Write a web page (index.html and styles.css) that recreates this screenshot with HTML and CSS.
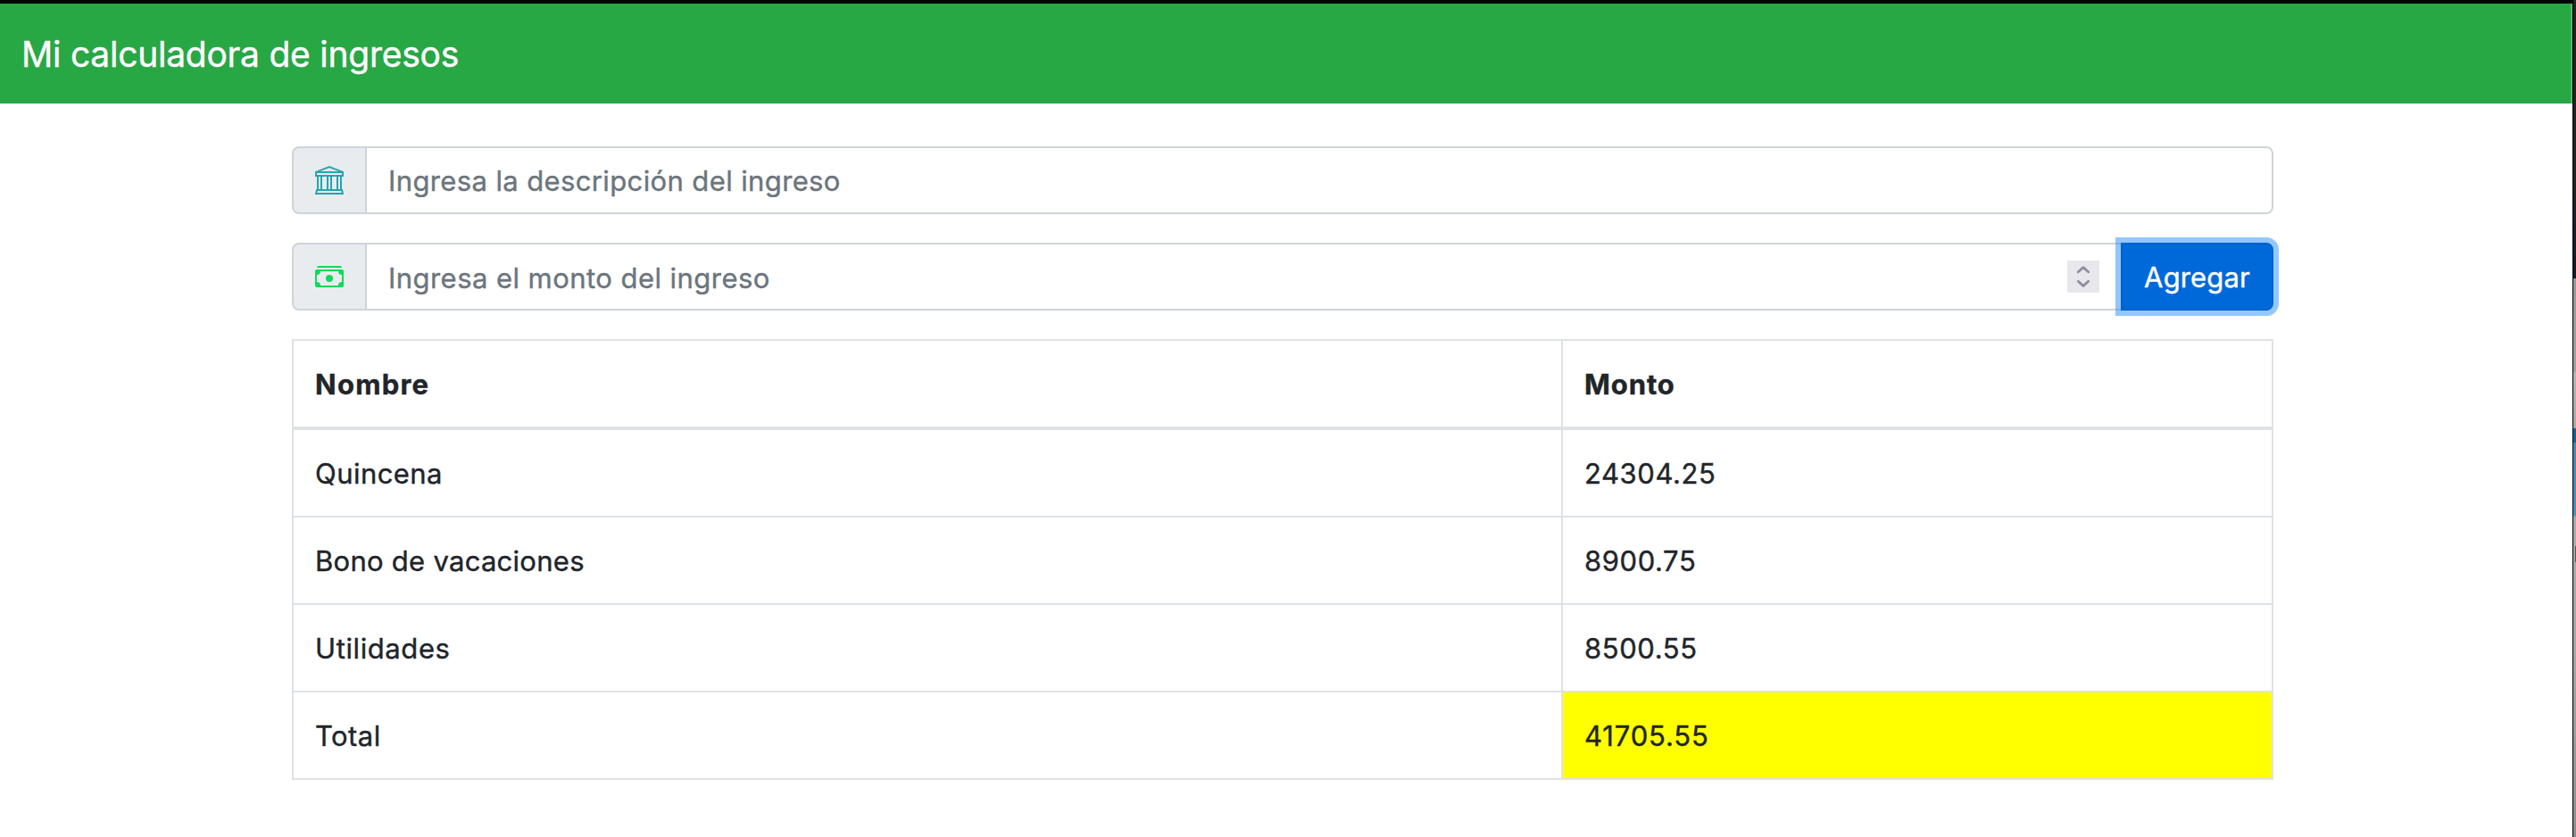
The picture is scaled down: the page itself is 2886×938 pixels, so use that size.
FILE: index.html
```
<!DOCTYPE html>
<html lang="es">
<head>
  <meta charset="utf-8">
  <title>Mi calculadora de ingresos</title>
  <link rel="stylesheet" href="styles.css">
</head>
<body>
  <div class="screen">
    <div class="window">
      <nav class="navbar"><span class="brand">Mi calculadora de ingresos</span></nav>
      <main class="container">
        <div class="input-group">
          <span class="addon addon-bank">
            <svg class="icon" viewBox="0 0 32 32" fill="none" stroke="currentColor" stroke-width="2">
              <path d="M1.5 6.7 16 1.1 30.5 6.7" stroke-width="1.9"/>
              <path d="M1 7h30v4H1z"/>
              <path d="M3 12v14M7 12v14M14 12v14M18 12v14M25 12v14M29 12v14"/>
              <path d="M2 27h28l1 4H1z"/>
            </svg>
          </span>
          <input class="field field-description" type="text" placeholder="Ingresa la descripción del ingreso">
        </div>
        <div class="input-group">
          <span class="addon addon-cash">
            <svg class="icon" viewBox="0 0 16 16" fill="currentColor">
              <path d="M14 3H1a1 1 0 0 1 1-1h12a1 1 0 0 1 1 1h-1z"/>
              <path fill-rule="evenodd" d="M15 5H1v8h14V5zM1 4a1 1 0 0 0-1 1v8a1 1 0 0 0 1 1h14a1 1 0 0 0 1-1V5a1 1 0 0 0-1-1H1z"/>
              <path d="M13 5a2 2 0 0 0 2 2V5h-2zM3 5a2 2 0 0 1-2 2V5h2zm10 8a2 2 0 0 1 2-2v2h-2zM3 13a2 2 0 0 0-2-2v2h2zm7-4a2 2 0 1 1-4 0 2 2 0 0 1 4 0z"/>
            </svg>
          </span>
          <div class="field field-amount">
            <input class="amount-input" type="text" inputmode="decimal" placeholder="Ingresa el monto del ingreso">
            <span class="spinner">
              <svg class="spinner-icon" viewBox="0 0 36 36" fill="none" stroke="currentColor" stroke-width="2.8" stroke-linecap="round" stroke-linejoin="round">
                <path d="M12.3 12.7 18 7.6l5.7 5.1M12.3 23.3l5.7 5.1 5.7-5.1"/>
              </svg>
            </span>
          </div>
          <button class="btn" type="button">Agregar</button>
        </div>
        <table class="table">
          <thead>
            <tr><th class="col-name name-head">Nombre</th><th class="amount-head">Monto</th></tr>
          </thead>
          <tbody>
            <tr><td>Quincena</td><td class="amount">24304.25</td></tr>
            <tr><td class="tight">Bono de vacaciones</td><td class="amount">8900.75</td></tr>
            <tr><td class="wide">Utilidades</td><td class="amount">8500.55</td></tr>
            <tr><td>Total</td><td class="amount total">41705.55</td></tr>
          </tbody>
        </table>
      </main>
    </div>
    <div class="desktop-edge"><span class="desktop-mark"></span></div>
  </div>
</body>
</html>
```
FILE: styles.css
```
* { box-sizing: border-box; }
body {
  margin: 0;
  background: #fff;
  color: #212529;
  font: 400 31px/48px Inter, "Liberation Sans", sans-serif;
  -webkit-text-stroke: 0.4px;
}
.screen { display: flex; height: 938px; overflow: hidden; }
.window { width: 2882px; flex: none; border-top: 4px solid #000; }
.navbar {
  height: 112px;
  padding: 2px 24px 0;
  display: flex;
  align-items: center;
  background: #28a745;
  border-right: 2px solid #5bb56c;
}
.brand { color: #fff; font-size: 39px; line-height: 60px; letter-spacing: -0.25px; white-space: nowrap; }
.container { width: 2220px; margin: 48px 0 0 327px; }

.input-group { display: flex; height: 76px; margin-bottom: 32px; }
.addon {
  width: 84px;
  flex: none;
  display: flex;
  align-items: center;
  justify-content: center;
  background: #e9ecef;
  border: 2px solid #ced4da;
  border-radius: 8px 0 0 8px;
}
.addon-bank { color: #22a6ae; }
.addon-cash { color: #10d95a; }
.icon { width: 32px; height: 32px; display: block; }
.field {
  flex: 1;
  min-width: 0;
  margin: 0;
  height: 76px;
  border: 2px solid #ced4da;
  border-left: 0;
  background: #fff;
}
.field-description {
  padding: 12px 24px;
  border-radius: 0 8px 8px 0;
  font: inherit;
  letter-spacing: 0.38px;
  -webkit-text-stroke: inherit;
}
.field-amount { display: flex; align-items: center; padding: 0 24px; border-right: 0; }
.amount-input {
  flex: 1;
  border: 0;
  padding: 2px 0 0;
  height: 50px;
  background: none;
  font: inherit;
  letter-spacing: 0.45px;
  -webkit-text-stroke: inherit;
}
.field::placeholder, .amount-input::placeholder { color: #6c757d; opacity: 1; }
.spinner { width: 36px; height: 36px; background: #e8e7ec; color: #8f8e9c; }
.spinner-icon { display: block; width: 36px; height: 36px; }
.btn {
  width: 171px;
  height: 76px;
  margin: 0;
  padding: 2px 0 0;
  border: 2px solid #0062cc;
  border-radius: 0 8px 8px 0;
  background: #0069d9;
  box-shadow: 0 0 0 6px rgba(38, 143, 255, .5);
  color: #fff;
  font: inherit;
  letter-spacing: 0.15px;
  -webkit-text-stroke: inherit;
}

.table {
  width: 2220px;
  table-layout: fixed;
  border-spacing: 0;
  border-collapse: separate;
  border: solid #dee2e6;
  border-width: 2px 0 0 2px;
}
.table th, .table td {
  height: 98px;
  padding: 25px 24px 23px;
  text-align: left;
  vertical-align: top;
  letter-spacing: 0.45px;
  border: solid #dee2e6;
  border-width: 0 2px 2px 0;
}
.table th { height: 100px; border-bottom-width: 4px; font-weight: 700; }
.table .col-name { width: 1422px; }
.table .name-head { letter-spacing: 1.25px; }
.table .amount-head { letter-spacing: 0.9px; }
.table .tight { letter-spacing: 0.27px; }
.table .wide { letter-spacing: 0.6px; }
.table .amount { letter-spacing: 0.58px; }
.table .total { background: #ff0; background-clip: padding-box; letter-spacing: 0.86px; }

/* Sliver of the desktop visible past the window's right edge */
.desktop-edge {
  width: 4px;
  flex: none;
  padding: 612px 0 0 2px;
  border-left: 1px solid #000;
  background: linear-gradient(
    #252226 0, #252226 200px, #141a28 312px,
    #989898 312px, #a0a0a0 417px,
    #b4b4b4 417px, #a8a8a8 480px,
    #0f6596 480px, #0f6596 496px,
    #4789ac 496px, #4c90b4 577px,
    #aaa 580px, #a5a5a5 750px, #8c8c8c 938px);
}
.desktop-mark { display: block; width: 1px; height: 18px; background: #555; }
```
